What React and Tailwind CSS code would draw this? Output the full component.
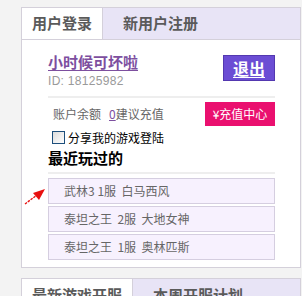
import React from 'react';

const recent = [
  { game: '武林3', server: '1服', name: '白马西风', gap: ' ' },
  { game: '泰坦之王', server: '2服', name: '大地女神', gap: '  ' },
  { game: '泰坦之王', server: '1服', name: '奥林匹斯', gap: '  ' },
];

const App = () => {
  return (
    <div
      className="min-h-screen bg-[#f3f3f3] pt-[7px] pl-[21px]"
      style={{ fontFamily: '"Noto Sans CJK SC", "Noto Sans", sans-serif' }}
    >
      {/* login panel */}
      <div className="w-[280px] border border-[#d4d0da] bg-white">
        <div className="flex h-[32px] border-b border-[#d4d0da]">
          <div className="w-[81px] border-r border-[#d4d0da] bg-white flex items-center justify-center text-[15px] font-bold text-[#5a5a5a]">
            用户登录
          </div>
          <div className="flex-1 bg-[#e8e4f6] pl-[20px] flex items-center text-[15px] font-bold text-[#5a5a5a]">
            新用户注册
          </div>
        </div>

        <div className="pl-[26px] pr-[25px] pb-[7px]">
          {/* user info */}
          <div className="flex justify-between pt-[12px]">
            <div>
              <a href="#" className="block text-[15px] leading-[20px] font-bold text-[#7d4f9f] underline underline-offset-2">
                小时候可坏啦
              </a>
              <div className="mt-[2px] text-[12px] leading-[14px] text-[#9a9a9a] tracking-[0.3px]" style={{ fontFamily: '"Liberation Sans", sans-serif' }}>
                ID: 18125982
              </div>
            </div>
            <button className="mt-[3px] w-[52px] h-[26px] bg-[#6b4dd4] border border-[#5338b0] text-white font-bold text-[16px] leading-none underline underline-offset-2">
              退出
            </button>
          </div>

          <div className="mt-[8px] h-[2px] bg-[#eeeeee]" />

          {/* balance */}
          <div className="mt-[4px] flex items-center justify-between h-[24px]">
            <div className="pl-[5px] text-[12px] text-[#666]">
              账户余额
              <a href="#" className="ml-[8px] text-[#7d4f9f] underline">0</a>
              建议充值
            </div>
            <button className="w-[70px] h-[24px] bg-[#ea106f] text-white text-[12px] leading-none">
              ¥充值中心
            </button>
          </div>

          {/* share checkbox */}
          <label className="mt-[5px] flex items-center gap-[3px] h-[13px] text-[12px] text-black">
            <span className="ml-[4px] w-[13px] h-[13px] border border-[#1d4f7c] bg-gradient-to-br from-[#dcdcdc] to-white" />
            分享我的游戏登陆
          </label>

          <div className="mt-[5px] text-[15px] leading-[18px] font-bold text-black">最近玩过的</div>

          <div className="mt-[5px] h-[2px] bg-[#eeeeee]" />

          {/* recent games */}
          <div className="relative mt-[4px] flex flex-col gap-[2px]">
            <svg className="absolute left-[-24px] top-[9px]" width="22" height="19" viewBox="0 0 22 19">
              <line x1="1" y1="17" x2="13" y2="8" stroke="#e81010" strokeWidth="1.4" strokeDasharray="2.5 1" />
              <polygon points="21,2 9,6 15,13" fill="#e81010" />
            </svg>
            {recent.map((r) => (
              <div
                key={r.game + r.server}
                className="h-[26px] border border-[#d5cee0] bg-[#f7f1fe] pl-[15px] flex items-center text-[12px] text-[#666] whitespace-pre"
              >
                {r.game}{r.gap}{r.server}  {r.name}
              </div>
            ))}
          </div>
        </div>
      </div>

      {/* server panel */}
      <div className="mt-[10px] w-[280px] border-t border-x border-[#d4d0da] bg-white">
        <div className="flex h-[32px]">
          <div className="w-[111px] border-r border-[#d4d0da] bg-white flex items-center pl-[10px] text-[15px] font-bold text-[#5a5a5a]">
            最新游戏开服
          </div>
          <div className="flex-1 bg-[#e8e4f6] pl-[20px] flex items-center text-[15px] font-bold text-[#5a5a5a]">
            本周开服计划
          </div>
        </div>
      </div>
    </div>
  );
};

export default App;
